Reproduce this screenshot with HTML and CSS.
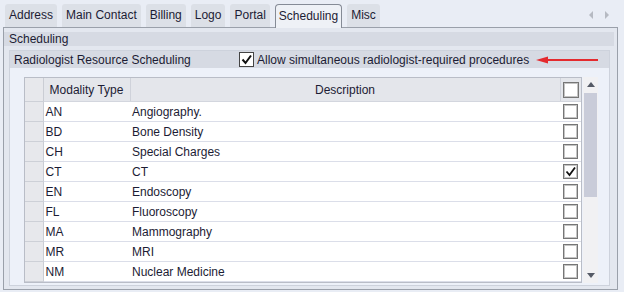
FILE: index.html
```html
<!DOCTYPE html>
<html lang="en">
<head>
    <meta charset="UTF-8">
    <title>Scheduling</title>
    <link rel="stylesheet" href="styles.css">
</head>
<body>

    <div class="tabbar">
        <div class="tab">Address</div>
        <div class="tab">Main Contact</div>
        <div class="tab">Billing</div>
        <div class="tab">Logo</div>
        <div class="tab">Portal</div>
        <div class="tab selected">Scheduling</div>
        <div class="tab">Misc</div>
        <div class="tab-arrows">
            <svg width="6" height="8" viewBox="0 0 6 8"><path d="M5 0 L1 4 L5 8 Z" fill="#b6bac2"/></svg>
            <svg width="6" height="8" viewBox="0 0 6 8"><path d="M1 0 L5 4 L1 8 Z" fill="#b6bac2"/></svg>
        </div>
    </div>

    <div class="panel">
        <div class="group-title">Scheduling</div>
        <div class="group-body">
            <div class="inner">
                <div class="sub-title">
                    <span class="sub-label">Radiologist Resource Scheduling</span>
                    <span class="check checked">
                        <svg width="13" height="13" viewBox="0 0 13 13"><path d="M2.5 6.5 L5.5 10 L11 2.5" fill="none" stroke="#111" stroke-width="2"/></svg>
                    </span>
                    <span class="check-label">Allow simultaneous radiologist-required procedures</span>
                    <svg class="red-arrow" width="64" height="8" viewBox="0 0 64 8"><path d="M0 4 L12 0.5 L12 7.5 Z" fill="#e42a2e"/><path d="M10 4 L62 4" stroke="#e42a2e" stroke-width="2"/></svg>
                </div>
                <div class="inner-body">
                    <div class="grid-wrap">
                        <table class="grid">
                            <colgroup>
                                <col class="c-row">
                                <col class="c-type">
                                <col class="c-desc">
                                <col class="c-chk">
                            </colgroup>
                            <thead>
                                <tr>
                                    <th class="rowhead"></th>
                                    <th>Modality Type</th>
                                    <th>Description</th>
                                    <th class="chk-cell"><span class="box"></span></th>
                                </tr>
                            </thead>
                            <tbody id="rows"></tbody>
                        </table>
                    </div>
                    <div class="scrollbar">
                        <div class="sb-btn"><svg width="8" height="5" viewBox="0 0 8 5"><path d="M0 5 L4 0 L8 5 Z" fill="#555a66"/></svg></div>
                        <div class="sb-thumb"></div>
                        <div class="sb-track"></div>
                        <div class="sb-btn"><svg width="8" height="5" viewBox="0 0 8 5"><path d="M0 0 L4 5 L8 0 Z" fill="#555a66"/></svg></div>
                    </div>
                </div>
            </div>
        </div>
    </div>

    <script>
        const modalities = [
            ['AN', 'Angiography.', false],
            ['BD', 'Bone Density', false],
            ['CH', 'Special Charges', false],
            ['CT', 'CT', true],
            ['EN', 'Endoscopy', false],
            ['FL', 'Fluoroscopy', false],
            ['MA', 'Mammography', false],
            ['MR', 'MRI', false],
            ['NM', 'Nuclear Medicine', false]
        ];

        const tick = '<svg width="13" height="13" viewBox="0 0 13 13"><path d="M2.5 6.5 L5.5 10 L11 2.5" fill="none" stroke="#111" stroke-width="1.8"/></svg>';
        const rows = document.getElementById('rows');

        modalities.forEach(([code, desc, on]) => {
            const tr = document.createElement('tr');
            tr.innerHTML = `<td class="rowhead"></td><td>${code}</td><td>${desc}</td>` +
                `<td class="chk-cell"><span class="box">${on ? tick : ''}</span></td>`;
            rows.appendChild(tr);
        });
    </script>

</body>
</html>
```

FILE: styles.css
```css
body {
    margin: 0;
    background: #e9edf5;
    font-family: "Liberation Sans", Arial, sans-serif;
    font-size: 12px;
    color: #1c1c34;
    height: 292px;
    overflow: hidden;
}
.tabbar {
    display: flex;
    align-items: flex-end;
    gap: 5px;
    height: 27px;
    padding-left: 5px;
    position: relative;
}
.tab {
    height: 23px;
    line-height: 22px;
    padding: 0 4px;
    background: #dce0e7;
    border-radius: 3px 3px 0 0;
}
.tab.selected {
    height: 23px;
    background: #eef1f6;
    border: 1px solid #858b96;
    border-bottom: none;
    border-radius: 4px 4px 0 0;
    margin-bottom: -1px;
    position: relative;
    z-index: 2;
    padding: 0 3px;
}
.tab-arrows {
    margin-left: auto;
    margin-right: 14px;
    display: flex;
    gap: 10px;
    align-self: center;
    margin-top: 2px;
}
.panel {
    margin-left: 3px;
    width: 615px;
    height: 263px;
    border: 1px solid #9aa0aa;
    background: #e3e7ef;
    padding: 4px 3px 0 0;
    box-sizing: border-box;
}
.group-title {
    height: 14px;
    line-height: 14px;
    background: #d6dae3;
    padding-left: 5px;
}
.group-body {
    padding: 4px 4px 0 5px;
}
.inner {
    border: 1px solid #cdd2dc;
    background: #edf1f9;
}
.sub-title {
    display: flex;
    align-items: center;
    height: 17px;
    background: #d6dae3;
    padding-left: 4px;
}
.sub-label {
    width: 225px;
}
.check {
    width: 13px;
    height: 13px;
    background: #fff;
    border: 1px solid #444;
    display: flex;
    align-items: center;
    justify-content: center;
    margin-right: 3px;
}
.red-arrow {
    margin-left: 7px;
}
.inner-body {
    display: flex;
    padding: 9px 10px 2px 14px;
}
.grid-wrap {
    width: 558px;
    height: 206px;
    border: 1px solid #b9bdc7;
    box-sizing: border-box;
    overflow: hidden;
    background: #fff;
}
.grid {
    border-collapse: collapse;
    table-layout: fixed;
    width: 556px;
}
.c-row { width: 18px; }
.c-type { width: 87px; }
.c-desc { width: 430px; }
.c-chk { width: 21px; }
.grid th {
    height: 23px;
    background: #e4e6eb;
    font-weight: normal;
    border-right: 1px solid #cfd2da;
    border-bottom: 1px solid #d3d6de;
    padding: 0;
}
.grid th:last-child {
    border-right: none;
}
.grid td {
    height: 19px;
    padding: 0 0 0 2px;
    border-bottom: 1px solid #dbdee9;
    white-space: nowrap;
}
.grid td.rowhead, .grid th.rowhead {
    background: #e7e8ec;
    border-right: 1px solid #cacdd4;
    border-bottom: 1px solid #cdd0d7;
    padding: 0;
}
.grid .chk-cell {
    padding: 0;
    text-align: center;
}
.box {
    display: inline-flex;
    align-items: center;
    justify-content: center;
    width: 13px;
    height: 13px;
    background: #fff;
    border: 1px solid #767676;
    box-shadow: inset 0 0 0 1px #c4c4c4;
    vertical-align: middle;
}
.grid th .box {
    width: 14px;
    height: 14px;
}
.scrollbar {
    width: 15px;
    height: 206px;
    margin-left: 1px;
    background: #f1f1f3;
    display: flex;
    flex-direction: column;
}
.sb-btn {
    height: 15px;
    display: flex;
    align-items: center;
    justify-content: center;
}
.sb-thumb {
    height: 104px;
    margin: 1px 1px 0;
    background: #c9ccd9;
}
.sb-track {
    flex: 1;
}
```
